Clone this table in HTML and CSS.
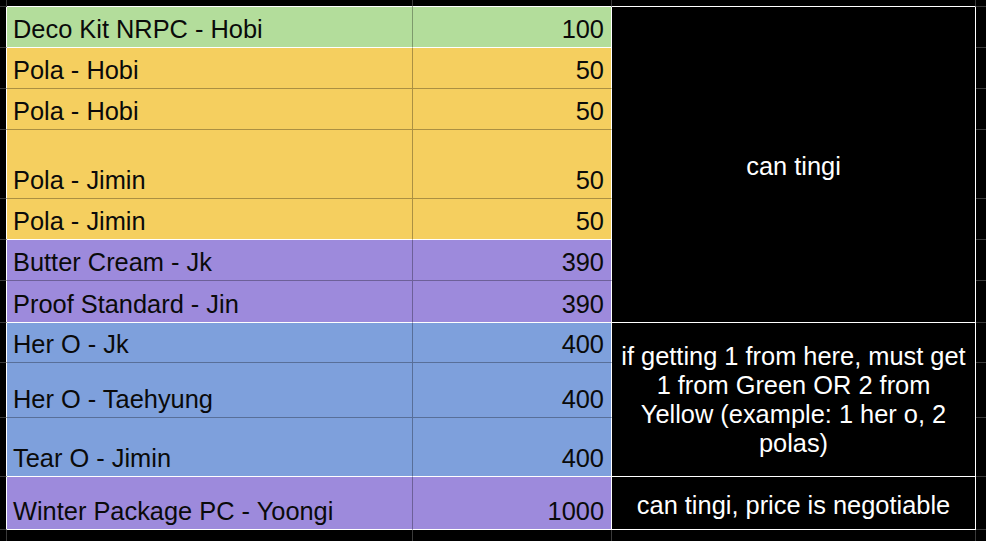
FILE: index.html
```html
<!DOCTYPE html>
<html>
<head>
<meta charset="utf-8">
<link rel="stylesheet" href="styles.css">
</head>
<body>
<div class="sheet">
  <!-- row 0 -->
  <div class="edge top"></div>
  <div class="edge top wl"></div>
  <div class="edge top wl"></div>
  <div class="edge top wl"></div>
  <div class="edge topr"></div>

  <!-- row 1 -->
  <div class="edge left"></div>
  <div class="cell name green gend">Deco Kit NRPC - Hobi</div>
  <div class="cell num green gend">100</div>
  <div class="note n1">can tingi</div>
  <div class="edge right"></div>

  <div class="edge left"></div>
  <div class="cell name yellow">Pola - Hobi</div>
  <div class="cell num yellow">50</div>
  <div class="edge right"></div>

  <div class="edge left"></div>
  <div class="cell name yellow">Pola - Hobi</div>
  <div class="cell num yellow">50</div>
  <div class="edge right"></div>

  <div class="edge left"></div>
  <div class="cell name yellow">Pola - Jimin</div>
  <div class="cell num yellow">50</div>
  <div class="edge right"></div>

  <div class="edge left"></div>
  <div class="cell name yellow gend">Pola - Jimin</div>
  <div class="cell num yellow gend">50</div>
  <div class="edge right"></div>

  <div class="edge left"></div>
  <div class="cell name purple">Butter Cream - Jk</div>
  <div class="cell num purple">390</div>
  <div class="edge right"></div>

  <div class="edge left"></div>
  <div class="cell name purple gend">Proof Standard - Jin</div>
  <div class="cell num purple gend">390</div>
  <div class="edge right"></div>

  <div class="edge left"></div>
  <div class="cell name blue">Her O - Jk</div>
  <div class="cell num blue">400</div>
  <div class="note n2">if getting 1 from here, must get 1 from Green OR 2 from Yellow (example: 1 her o, 2 polas)</div>
  <div class="edge right"></div>

  <div class="edge left"></div>
  <div class="cell name blue">Her O - Taehyung</div>
  <div class="cell num blue">400</div>
  <div class="edge right"></div>

  <div class="edge left"></div>
  <div class="cell name blue gend">Tear O - Jimin</div>
  <div class="cell num blue gend">400</div>
  <div class="edge right"></div>

  <div class="edge left"></div>
  <div class="cell name purple gend">Winter Package PC - Yoongi</div>
  <div class="cell num purple gend">1000</div>
  <div class="note n3">can tingi, price is negotiable</div>
  <div class="edge right"></div>

  <!-- bottom row -->
  <div class="edge bot"></div>
  <div class="edge bot"></div>
  <div class="edge bot"></div>
  <div class="edge bot"></div>
  <div class="edge botr"></div>
</div>
</body>
</html>
```

FILE: styles.css
```css
html, body {
  margin: 0;
  padding: 0;
  background: #000;
  overflow: hidden;
}

.sheet {
  width: 986px;
  height: 541px;
  display: grid;
  grid-template-columns: 7px 406px 199px 364px 1fr;
  grid-template-rows: 7px 41px 41px 41px 69px 41px 41px 42px 40px 55px 59px 53px 1fr;
  font-family: "Liberation Sans", Arial, sans-serif;
  font-size: 25.4px;
}

.sheet > div {
  box-sizing: border-box;
  min-width: 0;
  min-height: 0;
}

/* black surrounding gridlines */
.edge {
  background: #000;
}
.top {
  border-right: 1px solid #3a3a3a;
  border-bottom: 1px solid #3a3a3a;
}
.top.wl {
  border-bottom: 1px solid #fff;
}
.topr {
  border-bottom: 1px solid #3a3a3a;
}
.left {
  border-right: 1px solid #fff;
  border-bottom: 1px solid #3a3a3a;
}
.right {
  border-bottom: 1px solid #3a3a3a;
}
.bot {
  border-right: 1px solid #3a3a3a;
}

/* data cells */
.cell {
  display: flex;
  align-items: flex-end;
  color: #0a0a0a;
  line-height: 28px;
  padding: 0 7px 4px 6px;
  white-space: nowrap;
  border-bottom: 1px solid rgba(0, 0, 0, 0.3);
}
.cell.gend {
  border-bottom: 1px solid #fff;
}
.name {
  border-right: 1px solid rgba(0, 0, 0, 0.3);
}
.num {
  justify-content: flex-end;
  border-right: 1px solid #fff;
}

.green { background: #b3dd9b; }
.yellow { background: #f5cf5f; }
.purple { background: #9d8adc; }
.blue { background: #7ea0dc; }

/* notes column */
.note {
  display: flex;
  align-items: center;
  justify-content: center;
  text-align: center;
  color: #fff;
  background: #000;
  line-height: 29px;
  padding: 0 8px;
  border-right: 1px solid #fff;
  border-bottom: 1px solid #fff;
}
.n1 { grid-row: span 7; padding-top: 4px; }
.n2 { grid-row: span 3; }
.n3 { grid-row: span 1; padding-top: 4px; }
```
